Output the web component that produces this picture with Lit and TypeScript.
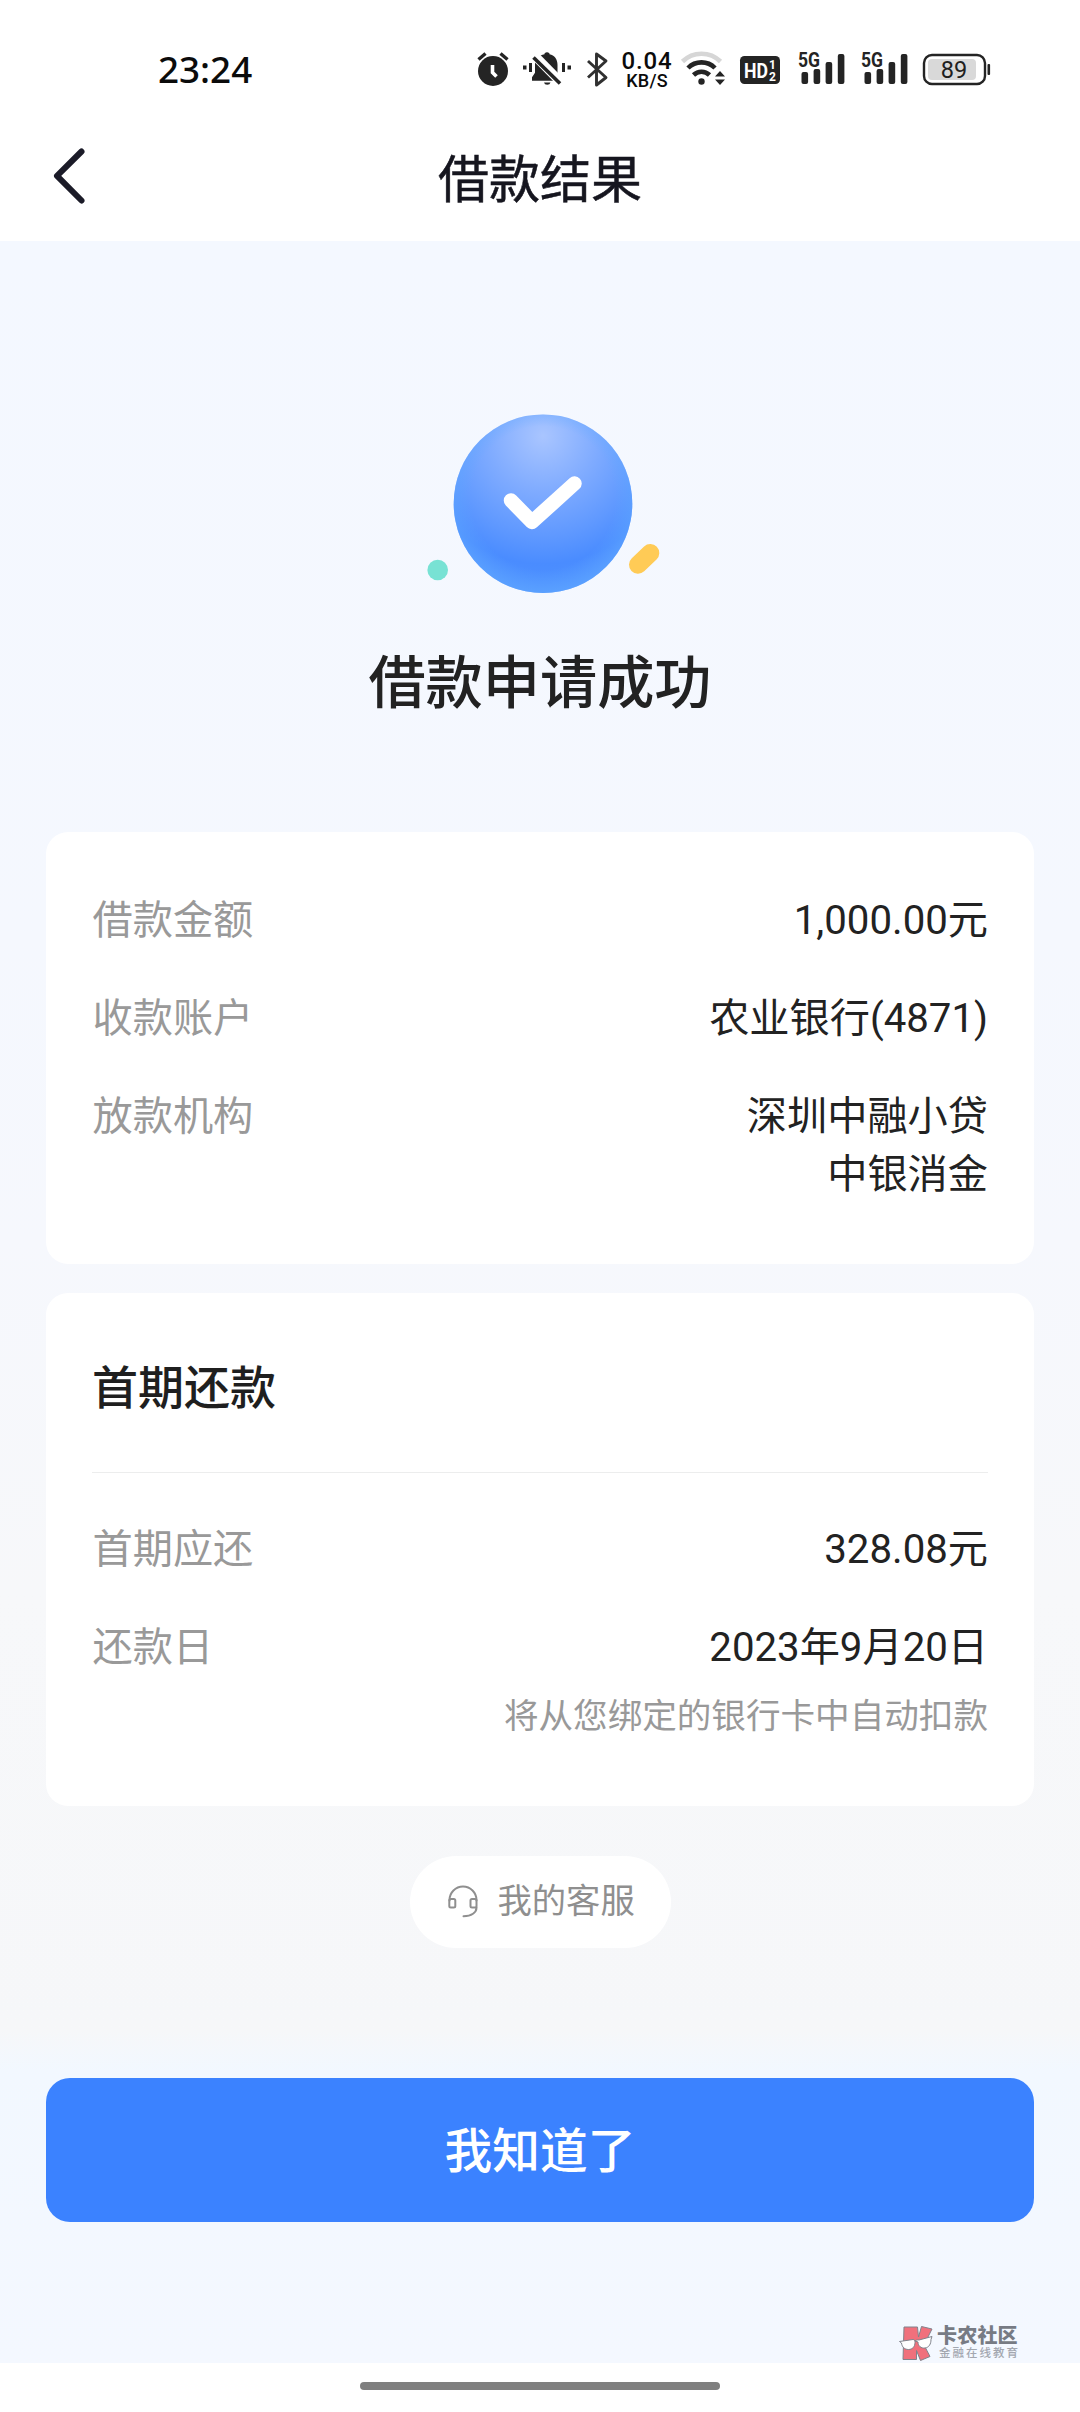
import { LitElement, html, css, svg } from "lit";
import { customElement, property } from "lit/decorators.js";

const FONT = css`Roboto, "Noto Sans CJK SC", sans-serif`;

interface DetailRow {
  label: string;
  lines: string[];
  hint?: string;
}

const LOAN: DetailRow[] = [
  { label: "借款金额", lines: ["1,000.00元"] },
  { label: "收款账户", lines: ["农业银行(4871)"] },
  { label: "放款机构", lines: ["深圳中融小贷", "中银消金"] },
];

const FIRST: DetailRow[] = [
  { label: "首期应还", lines: ["328.08元"] },
  { label: "还款日", lines: ["2023年9月20日"], hint: "将从您绑定的银行卡中自动扣款" },
];

@customElement("status-bar")
class StatusBar extends LitElement {
  static styles = css`
    :host { display: block; font-family: "Noto Sans", sans-serif; }
    .bar { display: flex; height: 100px; align-items: flex-start; }
    .time {
      width: 312px; padding: 47px 0 0 158px; font-size: 36.8px; line-height: 44px;
      font-weight: 500; color: #0b0b0b;
    }
    .speed {
      width: 58px; height: 100px; display: flex; flex-direction: column; align-items: center;
      padding-top: 51px; box-sizing: border-box; color: #0b0b0b; font-weight: 500;
      font-family: Roboto, sans-serif;
    }
    .rate { font-size: 24px; line-height: 21px; letter-spacing: 0.9px; }
    .unit { font-size: 18px; line-height: 18px; letter-spacing: 0.2px; }
    svg { display: block; flex: none; }
    .signal { font: 700 20px Roboto, sans-serif; }
    .hd { font: 700 21px Roboto, sans-serif; }
    .sub { font: 700 12px Roboto, sans-serif; }
    .level { font: 400 23.5px Roboto, sans-serif; }
  `;

  private signal(x: number) {
    return html`<svg width="63" height="100" viewBox="${x} 0 63 100" fill="#242424">
      ${svg`
        <rect x=${x + 11.5} y="72" width="6.6" height="12" rx="2"/>
        <rect x=${x + 23.6} y="69" width="6.6" height="15" rx="2"/>
        <rect x=${x + 35.6} y="62" width="6.6" height="22" rx="2"/>
        <rect x=${x + 47.8} y="54" width="6.6" height="30" rx="2"/>
        <text class="signal" x=${x + 8} y="67" textLength="22" lengthAdjust="spacingAndGlyphs">5G</text>
      `}
    </svg>`;
  }

  render() {
    return html`<div class="bar">
      <div class="time">23:24</div>
      <svg width="48" height="100" viewBox="470 0 48 100">
        <circle cx="493" cy="71" r="15" fill="#242424"/>
        <path d="M478.5 59.5l7-6M507.5 59.5l-7-6" stroke="#242424" stroke-width="3.4" fill="none"/>
        <path d="M492.5 65v7.500l4 4" stroke="#fff" stroke-width="3.6" fill="none"/>
      </svg>
      <svg width="60" height="100" viewBox="518 0 60 100" fill="#242424">
        <path d="M544.5 53.5q2.500-2.500 5 0v.8c5 1 8 5 8 10.500v9l3.500 5v2h-29v-3.500l3-4.500V64c0-5 4-8.700 9.500-9.700z"/>
        <path d="M544 82.500h6.500a3.300 2.800 0 0 1-6.500 0z"/>
        <path d="M535 56l26.500 27" stroke="#fff" stroke-width="9"/>
        <path d="M533.500 57.500L560 83.500" stroke="#242424" stroke-width="3.600"/>
        <path d="M523 65.500h3.500v4H523zM529 63h3v9h-3zM562 63h3v9h-3zM567.500 65.500h3.500v4h-3.500z"/>
      </svg>
      <svg width="40" height="100" viewBox="578 0 40 100">
        <path d="M588 61l18 16.500-9.500 7.500V54l9.500 7-18 16.500" fill="none" stroke="#303030"
          stroke-width="2.900" stroke-linejoin="round"/>
      </svg>
      <div class="speed"><div class="rate">0.04</div><div class="unit">KB/S</div></div>
      <svg width="56" height="100" viewBox="676 0 56 100" fill="none" stroke-width="4.600">
        <path d="M682.500 61.500a27 27 0 0 1 38 0" stroke="#d6d6d6"/>
        <path d="M688 68a19 19 0 0 1 27 0" stroke="#242424"/>
        <path d="M693.500 75a11.500 11.500 0 0 1 16 0" stroke="#242424"/>
        <circle cx="701.500" cy="81.500" r="3.200" fill="#242424"/>
        <path d="M715 76.500l5-5.500 5 5.500zM715 79.500l5 5.500 5-5.500z" fill="#242424"/>
      </svg>
      <svg width="58" height="100" viewBox="732 0 58 100">
        <rect x="740" y="56" width="40" height="28" rx="4.500" fill="#242424"/>
        <text class="hd" x="744" y="78" textLength="24" lengthAdjust="spacingAndGlyphs" fill="#fff">HD</text>
        <text class="sub" x="769" y="69" fill="#fff">1</text>
        <text class="sub" x="769" y="80.700" fill="#fff">2</text>
      </svg>
      ${this.signal(791)}${this.signal(854)}
      <svg width="84" height="100" viewBox="917 0 84 100">
        <rect x="925" y="55" width="61" height="29" rx="8" fill="#fff" stroke="#242424" stroke-width="2.400"/>
        <rect x="929" y="59" width="48" height="21" rx="4" fill="#d9d9d9"/>
        <rect x="988.500" y="64" width="2.600" height="11" rx="1" fill="#242424"/>
        <text class="level" x="955" y="77.500" text-anchor="middle" fill="#202020">89</text>
      </svg>
    </div>`;
  }
}

@customElement("detail-rows")
class DetailRows extends LitElement {
  @property({ attribute: false }) rows: DetailRow[] = [];

  static styles = css`
    :host { display: block; font-family: ${FONT}; }
    .rows { display: flex; flex-direction: column; gap: 40px; }
    .row { display: flex; justify-content: space-between; font-size: 40.2px; line-height: 58px; }
    .label { color: #999; padding-left: 0.5px; }
    .value { color: #222; text-align: right; }
    .hint { color: #999; font-size: 34.6px; line-height: 50px; padding-top: 14px; }
  `;

  render() {
    return html`<div class="rows">
      ${this.rows.map(
        (r) => html`<div class="row">
          <div class="label">${r.label}</div>
          <div class="value">
            ${r.lines.map((l) => html`<div>${l}</div>`)}
            ${r.hint ? html`<div class="hint">${r.hint}</div>` : null}
          </div>
        </div>`
      )}
    </div>`;
  }
}

@customElement("app-root")
class AppRoot extends LitElement {
  static styles = css`
    :host { display: block; font-family: ${FONT}; }
    .screen { width: 1080px; height: 2412px; display: flex; flex-direction: column; background: #fff; overflow: hidden; }
    .nav {
      height: 141px; display: grid; grid-template-columns: 140px 1fr 140px; align-items: start;
    }
    .back { display: block; margin: 46px 0 0 50px; }
    .title { font-size: 51px; line-height: 70px; font-weight: 400; text-align: center; color: #16161f; padding-top: 46px; -webkit-text-stroke: 0.5px #16161f; }
    .page {
      height: 2122px; box-sizing: border-box; padding: 0 46px; display: flex; flex-direction: column;
      background: linear-gradient(#f4f8ff 0, #f5f8fe 700px, #f6f8fd 1000px, #f7f8fa 1350px, #f6f7f9 1790px, #f2f8ff 1830px, #f4f8ff 2122px);
    }
    .hero { display: flex; flex-direction: column; align-items: center; height: 591px; }
    .badge { display: block; margin-top: 163px; }
    .done { font-size: 57.2px; line-height: 80px; font-weight: 500; color: #222; margin-top: 40px; }
    .card { background: #fff; border-radius: 22px; box-sizing: border-box; padding: 60px 46px; }
    .first { margin-top: 29px; height: 513px; padding-top: 59px; }
    .heading {
      font-size: 46px; line-height: 72px; font-weight: 500; color: #1f1f1f; height: 120px;
      border-bottom: 1.500px solid #eceded; margin-bottom: 48px;
    }
    .service {
      align-self: center; width: 261px; height: 92px; margin-top: 50px; border-radius: 46px; background: #fff;
      display: flex; align-items: center; box-sizing: border-box; padding: 0 0 2px 37px; gap: 15px;
      font-size: 34.3px; line-height: 50px; color: #8f8f8f;
    }
    .confirm {
      height: 144px; margin-top: 130px; border-radius: 24px; background: #3b82ff; color: #fff;
      font-size: 47.7px; line-height: 149px; font-weight: 500; text-align: center;
    }
    .brand { align-self: flex-end; display: flex; margin: 102px 14px 0 0; height: 38px; gap: 3px; }
    .name { font-size: 20px; line-height: 24px; font-weight: 900; color: #777b84; white-space: nowrap; letter-spacing: 0.2px; }
    .slogan { font-size: 11.5px; line-height: 14px; color: #a3a7b0; letter-spacing: 2px; font-weight: 500; margin: -2px 0 0 2px; white-space: nowrap; }
    .bottom { flex: 1; display: flex; justify-content: center; }
    .pill { width: 360px; height: 8px; border-radius: 4px; background: #7f7f7f; margin-top: 19px; }
  `;

  render() {
    return html`<div class="screen">
      <status-bar></status-bar>
      <div class="nav">
        <svg class="back" width="40" height="60" viewBox="50 146 40 60">
          <path d="M81.500 151.500L57 175.800l24.500 24.700" fill="none" stroke="#1b1b28" stroke-width="6"
            stroke-linecap="round" stroke-linejoin="round"/>
        </svg>
        <div class="title">借款结果</div>
      </div>
      <div class="page">
        <div class="hero">
          <svg class="badge" width="250" height="200" viewBox="415 404 250 200">
            <defs>
              <radialGradient id="ball" gradientUnits="userSpaceOnUse" cx="543" cy="436" r="160">
                <stop offset="0" stop-color="#a9c5ff"/>
                <stop offset="0.350" stop-color="#7fabff"/>
                <stop offset="0.620" stop-color="#6099ff"/>
                <stop offset="0.800" stop-color="#4a8cff"/>
                <stop offset="1" stop-color="#4f93ff"/>
              </radialGradient>
              <radialGradient id="rim" gradientUnits="userSpaceOnUse" cx="543" cy="498" r="97">
                <stop offset="0.740" stop-color="#62aaff" stop-opacity="0"/>
                <stop offset="1" stop-color="#62aaff" stop-opacity="0.650"/>
              </radialGradient>
            </defs>
            <circle cx="543" cy="503.700" r="89.300" fill="url(#ball)"/>
            <circle cx="543" cy="503.700" r="89.300" fill="url(#rim)"/>
            <path d="M511 500.500l21 21.500 42.500-38.500" fill="none" stroke="#fff" stroke-width="14.500"
              stroke-linecap="round" stroke-linejoin="round"/>
            <circle cx="437.700" cy="570" r="10.300" fill="#78e2d4"/>
            <path d="M638 564.700l12.300-11.700" stroke="#ffcb56" stroke-width="18" stroke-linecap="round"/>
          </svg>
          <div class="done">借款申请成功</div>
        </div>
        <div class="card"><detail-rows .rows=${LOAN}></detail-rows></div>
        <div class="card first">
          <div class="heading">首期还款</div>
          <detail-rows .rows=${FIRST}></detail-rows>
        </div>
        <div class="service">
          <svg width="36" height="36" viewBox="0 0 36 36" fill="none" stroke="#8f8f8f" stroke-width="2">
            <path d="M2.500 17.500V17a13.500 13.500 0 0 1 27 0v.5M29.500 24.500c0 5-5 8.800-13 8.800" stroke-linecap="round"/>
            <rect x="2.300" y="16" width="6" height="8.500" rx="1.500"/>
            <rect x="23.500" y="16" width="6" height="8.500" rx="1.500"/>
          </svg>
          <span>我的客服</span>
        </div>
        <div class="confirm">我知道了</div>
        <div class="brand">
          <svg width="36" height="38" viewBox="899 2323 36 38" stroke="#80838c" stroke-width="1">
            <path d="M905 2326h13.500l1 10 3-10.500 10.500 2.500-8 16 6 11.500-9.500 4-4-10v9H904z" fill="#f0707c"/>
            <path d="M900.500 2340.500l13.500-2c1.500 0 2 1 2 3 0 4-2.500 7-6.500 7s-6.500-2.500-7-6.500zM916 2340c2-1.500 3-1 4-1l13-3.500-1 3c0 4.500-2 8-6 8.500s-7-2-7-6z" fill="#fff"/>
          </svg>
          <div>
            <div class="name">卡农社区</div>
            <div class="slogan">金融在线教育</div>
          </div>
        </div>
      </div>
      <div class="bottom"><div class="pill"></div></div>
    </div>`;
  }
}
